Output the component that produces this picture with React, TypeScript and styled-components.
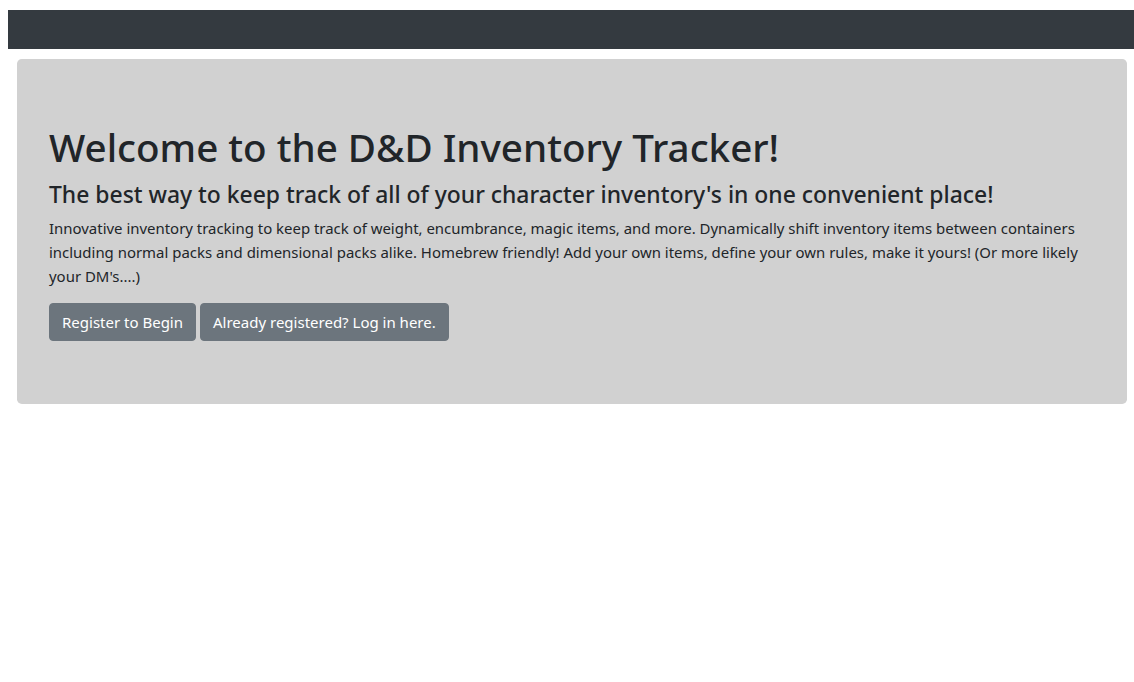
import React from "react";
import styled, { createGlobalStyle } from "styled-components";

const GlobalStyle = createGlobalStyle`
  html, body { margin: 0; padding: 0; background: #fff; }
  body {
    padding: 10px 0 0 8px;
    font-family: "Noto Sans", Lato, sans-serif;
    font-size: 15px;
    line-height: 24px;
    color: #212529;
    overflow: hidden;
  }
`;

const Navbar = styled.nav`
  height: 39px;
  background: #343a40;
`;

const Jumbotron = styled.section`
  margin: 10px 0 0 9px;
  width: 1110px;
  box-sizing: border-box;
  padding: 64px 32px 63px;
  background: #d1d1d1;
  border-radius: 4.8px;
  display: flex;
  flex-direction: column;
`;

const Title = styled.h1`
  margin: 0 0 10px;
  font-size: 38.6px;
  line-height: 48px;
  font-weight: 500;
`;

const Subtitle = styled.h4`
  margin: 0 0 8px;
  font-size: 22.9px;
  line-height: 27px;
  font-weight: 500;
`;

const Lead = styled.p`
  margin: 0 0 15px;
  font-size: 14.95px;
  line-height: 24px;
`;

const Actions = styled.div`
  display: flex;
  gap: 4px;
`;

const Button = styled.button`
  font-family: inherit;
  font-size: 15px;
  line-height: 24px;
  padding: 6px 12px;
  border: 1px solid #6c757d;
  border-radius: 4px;
  background: #6c757d;
  color: #fff;
  cursor: pointer;
`;

export default function App() {
  return (
    <>
      <GlobalStyle />
      <Navbar />
      <Jumbotron>
        <Title>Welcome to the D&amp;D Inventory Tracker!</Title>
        <Subtitle>
          The best way to keep track of all of your character inventory's in one convenient place!
        </Subtitle>
        <Lead>
          Innovative inventory tracking to keep track of weight, encumbrance, magic items, and more.
          Dynamically shift inventory items between containers including normal packs and dimensional
          packs alike. Homebrew friendly! Add your own items, define your own rules, make it yours! (Or
          more likely your DM's....)
        </Lead>
        <Actions>
          <Button>Register to Begin</Button>
          <Button>Already registered? Log in here.</Button>
        </Actions>
      </Jumbotron>
    </>
  );
}
